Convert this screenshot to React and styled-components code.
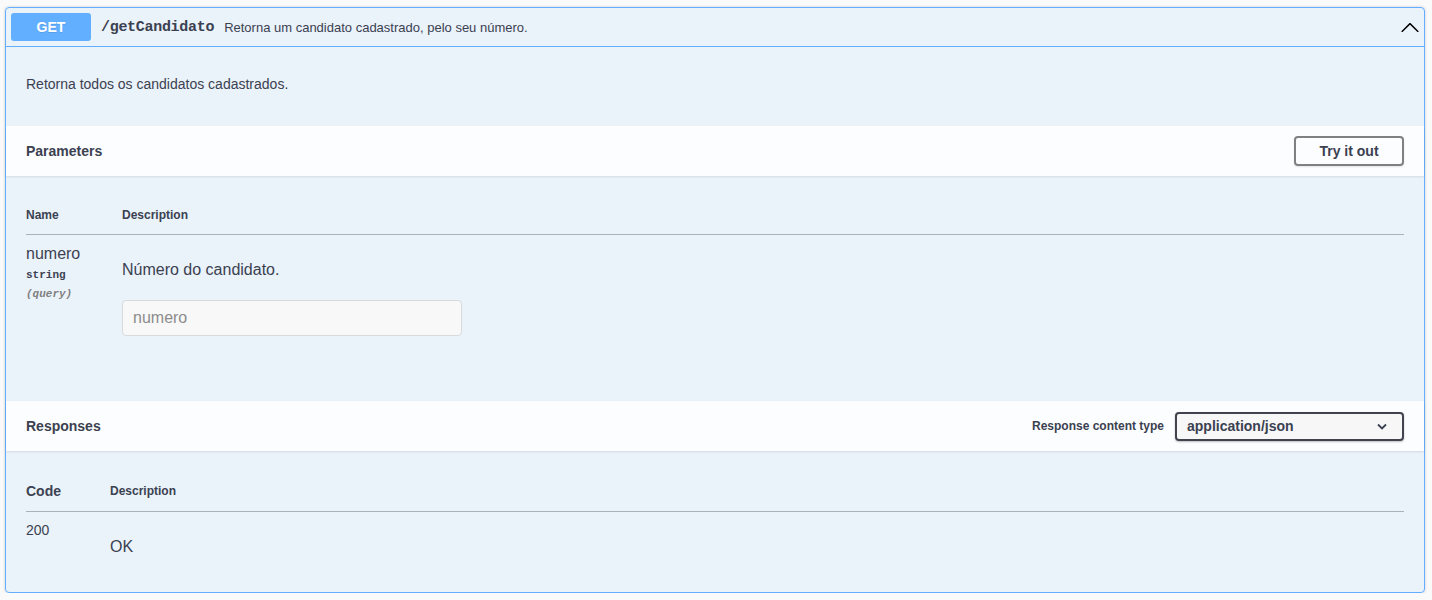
import React from 'react'
import styled, { createGlobalStyle } from 'styled-components'

const GlobalStyle = createGlobalStyle`
  html, body {
    margin: 0;
    padding: 0;
    background: #fafafa;
  }
  body {
    font-family: "Liberation Sans", Arial, sans-serif;
    color: #3b4151;
  }
  * { box-sizing: border-box; }
`

const Page = styled.div`
  padding: 7px 7px 0 5px;
`

const OpBlock = styled.div`
  background: rgba(97, 175, 254, 0.1);
  border: 1px solid #61affe;
  border-radius: 4px;
  box-shadow: 0 0 3px rgba(0, 0, 0, 0.19);
`

const Summary = styled.div`
  display: flex;
  align-items: center;
  padding: 5px;
  border-bottom: 1px solid #61affe;
`

const Method = styled.span`
  background: #61affe;
  border-radius: 3px;
  color: #fff;
  font-size: 14px;
  font-weight: 700;
  min-width: 80px;
  padding: 6px 0;
  line-height: 16px;
  text-align: center;
  text-shadow: 0 1px 0 rgba(0, 0, 0, 0.1);
`

const Path = styled.span`
  font-family: "Liberation Mono", "DejaVu Sans Mono", monospace;
  font-size: 15px;
  letter-spacing: -0.3px;
  font-weight: 700;
  color: #3b4151;
  padding: 0 10px;
`

const SummaryText = styled.span`
  flex: 1;
  font-size: 13px;
  color: #3b4151;
`

const Arrow = styled.svg`
  width: 20px;
  height: 20px;
  margin-right: -1px;
  fill: #000;
`

const DescWrapper = styled.div`
  padding: 15px 20px 19px;
`

const Paragraph = styled.p`
  margin: ${(p) => p.$margin || '1em 0'};
  font-size: ${(p) => p.$size || '14px'};
  line-height: ${(p) => p.$lh || '17px'};
  color: #3b4151;
`

const SectionHeader = styled.div`
  display: flex;
  align-items: center;
  min-height: 50px;
  padding: 8px 20px;
  background: rgba(255, 255, 255, 0.8);
  box-shadow: 0 1px 2px rgba(0, 0, 0, 0.1);
`

const SectionTitle = styled.h4`
  flex: 1;
  margin: 0;
  font-size: 14px;
  font-weight: 700;
  color: #3b4151;
`

const TryButton = styled.button`
  font-family: "Liberation Sans", Arial, sans-serif;
  background: transparent;
  border: 2px solid #808080;
  border-radius: 4px;
  box-shadow: 0 1px 2px rgba(0, 0, 0, 0.1);
  color: #3b4151;
  font-size: 14px;
  font-weight: 700;
  padding: 5px 23px;
  line-height: 16px;
  width: 110px;
`

const TableWrap = styled.div`
  padding: ${(p) => p.$pad || '20px'};
`

const Table = styled.table`
  width: 100%;
  border-collapse: collapse;
`

const HeadCell = styled.th`
  text-align: left;
  font-size: ${(p) => p.$size || '12px'};
  font-weight: 700;
  line-height: ${(p) => p.$lh || '14px'};
  padding: 12px 0;
  color: #3b4151;
  width: ${(p) => p.$width || 'auto'};
  border-bottom: 1px solid rgba(59, 65, 81, 0.2);
`

const Cell = styled.td`
  vertical-align: top;
  padding: 10px 0 ${(p) => p.$bottom || '10px'};
  color: #3b4151;
`

const ParamName = styled.div`
  font-size: 16px;
  line-height: 18px;
`

const ParamType = styled.div`
  font-family: "Liberation Mono", "DejaVu Sans Mono", monospace;
  font-size: 11px;
  font-weight: 700;
  padding: 5px 0 0;
  line-height: 14px;
`

const ParamIn = styled.div`
  font-family: "Liberation Mono", "DejaVu Sans Mono", monospace;
  font-size: 11px;
  font-style: italic;
  font-weight: 700;
  color: #808080;
  padding-top: 5px;
  line-height: 14px;
`

const TextInput = styled.input`
  display: block;
  width: 340px;
  height: 36px;
  margin: 5px 0;
  padding: 8px 10px;
  background: #f8f8f8;
  border: 1px solid #d9d9d9;
  border-radius: 4px;
  font-family: "Liberation Sans", Arial, sans-serif;
  font-size: 16px;
  color: #3b4151;
  &::placeholder { color: #8c8c8c; }
`

const ContentType = styled.div`
  display: flex;
  align-items: center;
  gap: 11px;
`

const ContentLabel = styled.label`
  font-size: 12px;
  font-weight: 700;
  color: #3b4151;
`

const Select = styled.div`
  display: flex;
  align-items: center;
  justify-content: space-between;
  width: 229px;
  height: 29px;
  padding: 0 15px 0 10px;
  background: #f7f7f7;
  border: 2px solid #41444e;
  border-radius: 4px;
  box-shadow: 0 1px 2px 0 rgba(0, 0, 0, 0.25);
  font-size: 14px;
  font-weight: 700;
  color: #3b4151;
`

const Code = styled.div`
  font-size: 14px;
  line-height: 16px;
`

export default function App() {
  return (
    <>
      <GlobalStyle />
      <Page>
        <OpBlock>
          <Summary>
            <Method>GET</Method>
            <Path>/getCandidato</Path>
            <SummaryText>Retorna um candidato cadastrado, pelo seu número.</SummaryText>
            <Arrow viewBox="0 0 20 20">
              <path d="M17.418 14.908c.272.268.709.268.979 0s.271-.701 0-.969l-7.908-7.83c-.27-.268-.707-.268-.979 0l-7.908 7.83c-.27.268-.27.701 0 .969.271.268.709.268.979 0L10 7.767l7.418 7.141z" />
            </Arrow>
          </Summary>

          <DescWrapper>
            <Paragraph>Retorna todos os candidatos cadastrados.</Paragraph>
          </DescWrapper>

          <SectionHeader>
            <SectionTitle>Parameters</SectionTitle>
            <TryButton>Try it out</TryButton>
          </SectionHeader>

          <TableWrap $pad="20px 20px 40px">
            <Table>
              <thead>
                <tr>
                  <HeadCell $width="96px">Name</HeadCell>
                  <HeadCell>Description</HeadCell>
                </tr>
              </thead>
              <tbody>
                <tr>
                  <Cell $bottom="20px">
                    <ParamName>numero</ParamName>
                    <ParamType>string</ParamType>
                    <ParamIn>(query)</ParamIn>
                  </Cell>
                  <Cell $bottom="20px">
                    <Paragraph $size="16px" $lh="18px" $margin="16px 0 21px">Número do candidato.</Paragraph>
                    <TextInput type="text" placeholder="numero" />
                  </Cell>
                </tr>
              </tbody>
            </Table>
          </TableWrap>

          <SectionHeader>
            <SectionTitle>Responses</SectionTitle>
            <ContentType>
              <ContentLabel>Response content type</ContentLabel>
              <Select>
                <span>application/json</span>
                <svg width="10" height="7" viewBox="0 0 10 7">
                  <path d="M1 1.5l4 4 4-4" fill="none" stroke="#3b4151" strokeWidth="1.8" />
                </svg>
              </Select>
            </ContentType>
          </SectionHeader>

          <TableWrap $pad="20px 20px 10px">
            <Table>
              <thead>
                <tr>
                  <HeadCell $width="84px" $size="14px" $lh="16px">Code</HeadCell>
                  <HeadCell>Description</HeadCell>
                </tr>
              </thead>
              <tbody>
                <tr>
                  <Cell>
                    <Code>200</Code>
                  </Cell>
                  <Cell>
                    <Paragraph $size="16px" $lh="18px">OK</Paragraph>
                  </Cell>
                </tr>
              </tbody>
            </Table>
          </TableWrap>
        </OpBlock>
      </Page>
    </>
  )
}
